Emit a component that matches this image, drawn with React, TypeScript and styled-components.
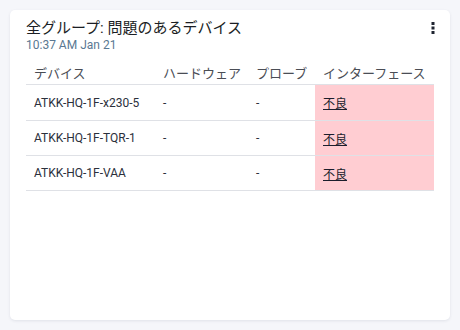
import styled, { createGlobalStyle } from "styled-components";

const GlobalStyle = createGlobalStyle`
  body {
    margin: 0;
    background: #f5f6fa;
    font-family: Roboto, "Noto Sans CJK JP", sans-serif;
  }
`;

type Row = {
  device: string;
  hardware: string;
  probe: string;
  iface: string;
  bad: boolean;
};

const rows: Row[] = [
  { device: "ATKK-HQ-1F-x230-5", hardware: "-", probe: "-", iface: "不良", bad: true },
  { device: "ATKK-HQ-1F-TQR-1", hardware: "-", probe: "-", iface: "不良", bad: true },
  { device: "ATKK-HQ-1F-VAA", hardware: "-", probe: "-", iface: "不良", bad: true },
];

export default function App() {
  return (
    <Page>
      <GlobalStyle />
      <Card>
        <Header>
          <div>
            <Title>全グループ: 問題のあるデバイス</Title>
            <Time>10:37 AM Jan 21</Time>
          </div>
          <MenuButton aria-label="menu">
            <svg width="4" height="12" viewBox="0 0 4 12">
              <rect x="0.5" y="0" width="3" height="3" fill="#1f2430" />
              <rect x="0.5" y="4.5" width="3" height="3" fill="#1f2430" />
              <rect x="0.5" y="9" width="3" height="3" fill="#1f2430" />
            </svg>
          </MenuButton>
        </Header>
        <Table>
          <colgroup>
            <col style={{ width: 129 }} />
            <col style={{ width: 93 }} />
            <col style={{ width: 67 }} />
            <col />
          </colgroup>
          <thead>
            <tr>
              <Th>デバイス</Th>
              <Th>ハードウェア</Th>
              <Th>プローブ</Th>
              <Th>インターフェース</Th>
            </tr>
          </thead>
          <tbody>
            {rows.map((r) => (
              <tr key={r.device}>
                <Td>{r.device}</Td>
                <Td>{r.hardware}</Td>
                <Td>{r.probe}</Td>
                <Td $bad={r.bad}>
                  <StatusLink href="#">{r.iface}</StatusLink>
                </Td>
              </tr>
            ))}
          </tbody>
        </Table>
      </Card>
    </Page>
  );
}

const Page = styled.div`
  padding: 10px;
  height: 330px;
  box-sizing: border-box;
`;

const Card = styled.div`
  background: #fff;
  border-radius: 5px;
  box-shadow: 0 1px 3px rgba(40, 50, 80, 0.1);
  height: 310px;
  box-sizing: border-box;
  padding: 8px 16px 0 16px;
`;

const Header = styled.div`
  display: flex;
  justify-content: space-between;
  align-items: flex-start;
`;

const Title = styled.div`
  font-size: 15px;
  line-height: 20px;
  color: #1b1e24;
`;

const Time = styled.div`
  font-size: 12px;
  line-height: 14px;
  color: #5a7892;
`;

const MenuButton = styled.div`
  padding: 4px 0 0 0;
  margin-right: -1px;
  display: flex;
`;

const Table = styled.table`
  width: 100%;
  margin-top: 8px;
  border-collapse: collapse;
  table-layout: fixed;
`;

const Th = styled.th`
  text-align: left;
  font-weight: 400;
  font-size: 13px;
  color: #4a4d55;
  padding: 3px 8px 2px 8px;
  height: 17px;
  white-space: nowrap;
  border-bottom: 1px solid #dfe1e6;
`;

const Td = styled.td<{ $bad?: boolean }>`
  font-size: 12px;
  color: #2b303b;
  padding: 0 8px;
  height: 34px;
  border-bottom: 1px solid #dfe1e6;
  background: ${(p) => (p.$bad ? "#ffcdd2" : "transparent")};
  tr:first-child > & {
    height: 35px;
  }
`;

const StatusLink = styled.a`
  color: #1b1e2c;
  text-decoration: underline;
`;
